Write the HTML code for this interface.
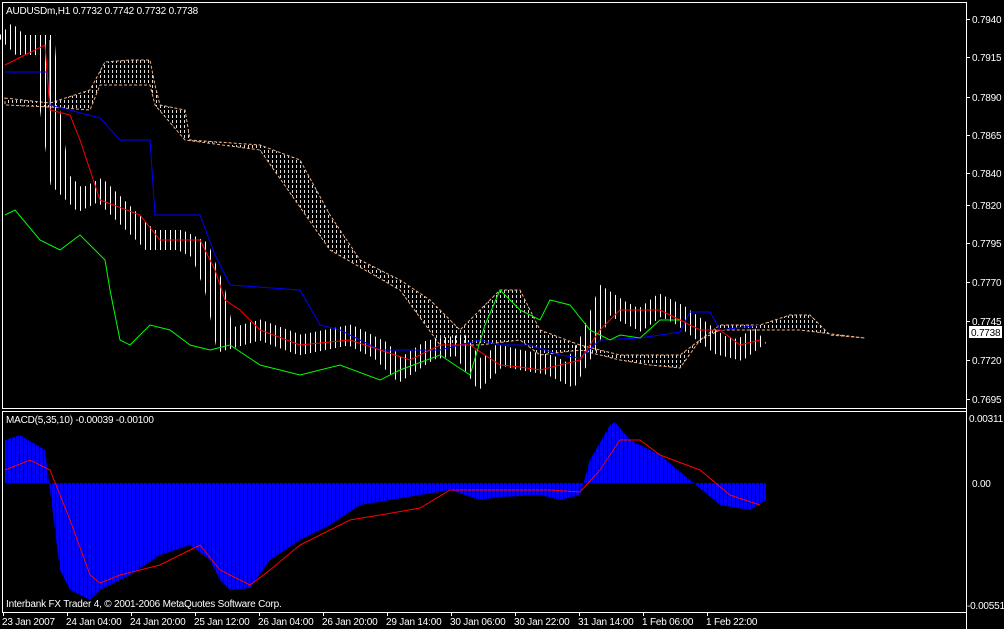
<!DOCTYPE html>
<html><head><meta charset="utf-8"><style>
html,body{margin:0;padding:0;background:#000;}
svg{display:block;}
text{font-family:"Liberation Sans",sans-serif;font-size:10px;letter-spacing:-0.2px;fill:#fff;}
</style></head><body>
<svg width="1004" height="629" viewBox="0 0 1004 629" xmlns="http://www.w3.org/2000/svg">
<defs>
<pattern id="bars" width="5" height="7" patternUnits="userSpaceOnUse"><rect x="0" y="0" width="1" height="7" fill="#fff"/></pattern>
<pattern id="cloud" width="4" height="5" patternUnits="userSpaceOnUse"><rect x="0" y="0" width="1" height="3" fill="#ddd"/></pattern>
<pattern id="hist" width="4" height="4" patternUnits="userSpaceOnUse"><rect x="0" y="0" width="3" height="4" fill="#0000ff"/></pattern>
</defs>
<rect width="1004" height="629" fill="#000"/>
<rect x="2.5" y="2.5" width="964" height="406" fill="none" stroke="#fff"/>
<line x1="2" y1="411.5" x2="967" y2="411.5" stroke="#fff"/>
<line x1="2.5" y1="411" x2="2.5" y2="612" stroke="#fff"/>
<line x1="966.5" y1="2" x2="966.5" y2="629" stroke="#fff"/>
<line x1="2" y1="612.5" x2="967" y2="612.5" stroke="#fff"/>
<polygon fill="url(#cloud)" stroke="#f0b080" stroke-dasharray="3,2" points="5,98 50,103 90,90 105,62 130,60 150,60 155,85 160,105 185,110 190,140 260,145 300,160 330,215 360,260 400,280 430,300 460,330 490,300 500,290 520,290 540,330 580,345 600,350 620,355 680,355 700,340 720,325 760,325 790,315 810,315 830,335 865,338 840,335 800,330 760,330 720,330 700,340 680,368 650,365 620,360 580,350 540,355 520,340 480,345 440,345 400,290 330,250 260,150 185,140 155,105 150,85 100,85 90,110 50,107 5,105"/>
<polyline fill="none" stroke="url(#bars)" stroke-width="20" points="5,30 20,45 45,45 50,110 60,180 80,200 100,190 120,210 150,240 180,240 200,250 215,290 225,340 260,330 300,345 350,335 380,350 400,370 430,350 460,345 480,375 500,355 520,360 550,365 570,375 590,340 605,300 620,310 640,320 660,305 680,315 700,330 720,345 740,350 760,335"/>
<polyline fill="none" stroke="#fff" stroke-width="1" points="50,40 50,110"/>
<polyline fill="none" stroke="#0000ff" points="5,72 47,72 50,105 100,118 120,140 150,140 155,215 200,215 215,255 230,285 300,290 320,325 340,330 380,350 440,350 460,345 480,340 500,345 530,345 560,355 580,358 600,340 640,338 680,332 690,312 710,312 720,330 760,325"/>
<polyline fill="none" stroke="#ff0000" points="5,65 25,55 45,45 50,110 70,115 80,140 100,200 140,215 160,240 200,240 215,270 225,300 240,310 260,330 300,345 350,340 380,350 410,360 440,345 470,345 500,365 520,367 540,370 560,365 580,360 600,330 620,310 660,310 680,320 700,330 720,330 740,345 760,340"/>
<polyline fill="none" stroke="#00ff00" points="5,215 15,210 40,240 60,250 80,235 95,250 105,260 110,290 120,340 130,345 150,325 170,330 190,345 210,350 230,345 260,365 300,375 340,365 380,380 400,370 440,355 470,375 485,325 500,290 520,310 540,320 550,300 570,305 590,330 610,340 620,335 640,338 660,320 680,320"/>
<text x="6" y="14">AUDUSDm,H1  0.7732 0.7742 0.7732 0.7738</text>
<g>
<text x="972" y="23">0.7940</text><text x="972" y="61">0.7915</text><text x="972" y="101">0.7890</text><text x="972" y="139">0.7865</text><text x="972" y="177">0.7840</text><text x="972" y="209">0.7820</text><text x="972" y="247">0.7795</text><text x="972" y="286">0.7770</text><text x="972" y="325">0.7745</text><text x="972" y="364">0.7720</text><text x="972" y="403">0.7695</text>
</g>
<g stroke="#fff"><line x1="967" y1="19.5" x2="970" y2="19.5"/><line x1="967" y1="57.5" x2="970" y2="57.5"/><line x1="967" y1="97.5" x2="970" y2="97.5"/><line x1="967" y1="135.5" x2="970" y2="135.5"/><line x1="967" y1="173.5" x2="970" y2="173.5"/><line x1="967" y1="205.5" x2="970" y2="205.5"/><line x1="967" y1="243.5" x2="970" y2="243.5"/><line x1="967" y1="282.5" x2="970" y2="282.5"/><line x1="967" y1="321.5" x2="970" y2="321.5"/><line x1="967" y1="360.5" x2="970" y2="360.5"/><line x1="967" y1="399.5" x2="970" y2="399.5"/></g>
<rect x="969" y="326" width="33" height="12" fill="#fff"/>
<text x="971" y="336" style="fill:#000">0.7738</text>
<polygon fill="url(#hist)" points="5,440 20,435 45,450 50,490 55,530 60,570 70,590 90,600 100,590 130,575 160,555 190,545 210,560 220,580 230,590 250,588 270,560 300,540 330,525 360,505 390,500 420,495 450,490 480,500 500,497 540,495 560,500 580,495 590,460 610,425 615,422 630,440 660,455 690,480 720,505 750,510 766,500 766,483 5,483"/>
<polyline fill="none" stroke="#ff0000" points="5,470 30,460 50,470 70,520 90,575 100,583 120,575 160,565 200,545 220,570 250,585 270,570 300,545 350,520 380,515 420,508 450,490 500,490 550,490 580,492 600,470 620,440 640,440 660,455 700,470 730,495 760,505"/>
<text x="6" y="423">MACD(5,35,10) -0.00039 -0.00100</text>
<text x="969" y="422">0.00311</text><text x="972" y="487">0.00</text><text x="967" y="609">-0.00551</text>
<text x="6" y="607">Interbank FX Trader 4, © 2001-2006 MetaQuotes Software Corp.</text>
<g stroke="#fff"><line x1="3.5" y1="612" x2="3.5" y2="616"/><line x1="67.5" y1="612" x2="67.5" y2="616"/><line x1="131.5" y1="612" x2="131.5" y2="616"/><line x1="195.5" y1="612" x2="195.5" y2="616"/><line x1="259.5" y1="612" x2="259.5" y2="616"/><line x1="323.5" y1="612" x2="323.5" y2="616"/><line x1="387.5" y1="612" x2="387.5" y2="616"/><line x1="451.5" y1="612" x2="451.5" y2="616"/><line x1="515.5" y1="612" x2="515.5" y2="616"/><line x1="579.5" y1="612" x2="579.5" y2="616"/><line x1="643.5" y1="612" x2="643.5" y2="616"/><line x1="707.5" y1="612" x2="707.5" y2="616"/></g>
<g>
<text x="2" y="625">23 Jan 2007</text><text x="66" y="625">24 Jan 04:00</text><text x="130" y="625">24 Jan 20:00</text><text x="194" y="625">25 Jan 12:00</text><text x="258" y="625">26 Jan 04:00</text><text x="322" y="625">26 Jan 20:00</text><text x="386" y="625">29 Jan 14:00</text><text x="450" y="625">30 Jan 06:00</text><text x="514" y="625">30 Jan 22:00</text><text x="578" y="625">31 Jan 14:00</text><text x="642" y="625">1 Feb 06:00</text><text x="706" y="625">1 Feb 22:00</text>
</g>
</svg>
</body></html>
